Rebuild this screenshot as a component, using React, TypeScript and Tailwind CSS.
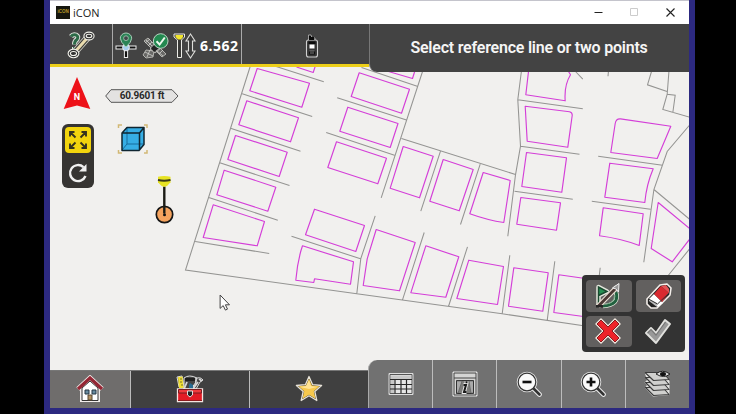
import type { ReactNode } from 'react';

const boundaries = [
  'M250 65L185 269.5L356.3 293.3L501.7 313.3L595 327',
  'M260 61L323.3 81.3',
  'M241.7 93.3L311.7 116',
  'M230 127.7L300 150.7',
  'M219.3 162.3L289 185',
  'M208.3 197L277.3 219.7',
  'M194.7 241L268.7 253',
  'M424 65L380.7 197.3',
  'M361 67L416.7 85.7',
  'M336.7 97.3L406 119.5',
  'M325.7 132L394 154.7',
  'M401 138L515 174',
  'M440 150.7L420.3 210.7',
  'M479.7 163.7L460 224',
  'M521 70L517.3 99.3L520 145.7L515 174.3L507.3 235.7',
  'M517.3 99.3L582.3 108.3',
  'M520 145.7L579 153.7',
  'M514 190.7L572.3 198.7',
  'M291 235.7L360 258.3',
  'M374.7 215.3L360.3 258L356.3 293.3',
  'M423.7 232L402 299.3',
  'M467 246.3L448 306',
  'M509.3 254.7L501.7 313.3',
  'M554.3 260.7L546.7 320',
  'M599.7 267.3L593 323',
  'M597.7 155.7L662 164.7',
  'M591.3 200.7L650 208.7',
  'M690 123.5L666.7 151L653.4 189L643.3 261.7',
  'M653.4 189L690 219.5',
  'M691 246L667.7 275',
  'M651 71L647 84.3L667.3 91.3',
  'M668.5 70L666.7 93.7L674.7 94.7L672.3 112.3',
  'M666.7 93.7L662.3 109L690 117',
  'M575 71L582.3 78.7',
  'M608 70L607.5 75.7',
];

const lots = [
  'M296 66.5L312.7 72L315 65',
  'M256.7 68L309 82.7L301.3 106.7L249.3 90.3Z',
  'M246.3 100.3L298 117.3L290 141.3L238.3 124.3Z',
  'M235 135L286.7 151.7L278.7 176L227.3 159Z',
  'M223.7 169.7L275.3 186.7L267.3 210.7L216.3 194.3Z',
  'M212.7 204.3L264 221L256.7 245.3L202.7 237Z',
  'M388 71L412 78L414.5 70',
  'M358.7 72.3L409 88.7L401 112.7L350.7 96Z',
  'M347.3 106.7L397.5 123L389.7 147L339.3 130.7Z',
  'M336 141.3L386 157.7L377.3 183.3L327.3 167Z',
  'M402.7 146L432.7 155.7L419 197.3L389.7 187.7Z',
  'M442.7 159L472.7 169L458.7 210.3L429.3 200.7Z',
  'M482.7 172L509.7 180L503.3 222Q488 220 469.3 213.3Z',
  'M314 208.7L364 225L355.3 251L305 234.3Z',
  'M302 245.3L353 261.3L350 283.7L314 278.3L313.3 282L295.3 279.7Q297 260 302 245.3Z',
  'M375.7 229L414.7 242L399 290.3L362.7 285L366.7 258.3Z',
  'M425.3 245.3L458.3 256.3L445.3 296.7L410.3 292.3Z',
  'M468.3 259.7L503 266L497 304L456.3 298Z',
  'M513.3 267.3L547.7 272.3L542.3 310.7L508 305.7Z',
  'M583 277.7L558.3 274.3L553.3 312L583 316',
  'M528 71L525.3 94.3L564.7 100.3Q563.5 85 570 74.3L568 71',
  'M524.7 105.7L569 111.2Q572 112 571.7 115L567.3 146.7L526.7 140.7Z',
  'M526 152L566 157.3L561.3 191.7L521.3 186Z',
  'M520.3 197L560 202.3L556 229.7L516.3 223.7Z',
  'M614.7 123Q615.5 118 620 118.4L670.3 125.7L656.7 158L610.3 152Z',
  'M609.3 162.7L652.7 168.3Q646 184 644.3 202L604.3 196.7Z',
  'M602.7 207.3L642.7 213.3L638.7 245Q620 238 599 235.3Z',
  'M692 230.5L657.7 202L650.7 248L671.7 261.3L692 235',
];

function SiteMap() {
  return (
    <svg className="absolute left-0 top-0" width="640" height="384" viewBox="49.5 23.5 640 384" fill="none">
      <path d={boundaries.join('')} stroke="#949492" strokeWidth="1.05" />
      <path d={lots.join('')} stroke="#d43ed8" strokeWidth="1.15" strokeLinejoin="round" />
      <g stroke="#1b1b14" strokeWidth="1.2">
        <circle cx="164" cy="214" r="8.2" fill="#f5a35e" stroke="#151515" strokeWidth="1.7" />
        <path d="M163.800 186v27" strokeWidth="2.4" />
        <circle cx="164" cy="214.200" r="1.5" fill="#111" stroke="none" />
        <path d="M157.500 176.200q6-1.600 12.500 0v5.500l-3.200 3.500q-3 2-6 0l-3.300-3.500z" fill="#e7e324" stroke="none" />
        <path d="M157.500 179.600q6 1.200 12.500 0" stroke="#383719" strokeWidth="2" />
      </g>
      <path d="M219.6 294.500v13.400l3.1-2.8 2.2 4.5 2.1-1-2.1-4.3h4.1z" fill="#fff" stroke="#444" strokeWidth="1" />
    </svg>
  );
}

type IconProps = { w: number; h: number; children: ReactNode; className?: string };
function Icon({ w, h, children, className }: IconProps) {
  return (
    <svg className={className} width={w} height={h} viewBox={`0 0 ${w} ${h}`} fill="none">
      {children}
    </svg>
  );
}

function MeasureIcon() {
  return (
    <Icon w={28} h={28}>
      <path d="M4 5.500q2-2.500 5-1.500 3 1.500 1 4.500-2.500 1.500-2.500 5M7.500 16v2.500" stroke="#dfe3dc" strokeWidth="5" />
      <path d="M4 5.500q2-2.500 5-1.500 3 1.500 1 4.500-2.500 1.500-2.500 5M7.500 16v2.500" stroke="#2c6a47" strokeWidth="3" />
      <path d="M7 22L22 5" stroke="#d9d8cf" strokeWidth="7" />
      <path d="M7 22L22 5" stroke="#3c3c38" strokeWidth="5.4" />
      <path d="M7 22L22 5" stroke="#eadcae" strokeWidth="3" />
      <g fill="#333" stroke="#f2f2ec" strokeWidth="1.1">
        <ellipse cx="6.5" cy="22.5" rx="5.4" ry="4.2" />
        <ellipse cx="22" cy="5" rx="5.1" ry="3.9" />
        <ellipse cx="6.5" cy="22.5" rx="3.1" ry="2" />
        <ellipse cx="22" cy="5" rx="2.8" ry="1.7" />
      </g>
    </Icon>
  );
}

function PositionIcon() {
  return (
    <Icon w={22} h={28}>
      <path d="M.5 15.500h21M11 13v13" stroke="#eee" strokeWidth="4.200" />
      <path d="M1.500 15.500h19M11 13v12" stroke="#111" strokeWidth="2.200" />
      <circle cx="11" cy="15.5" r="3.4" fill="#a8cfee" stroke="#eee" />
      <path d="M11 15q-5.7-5-5.7-8.8a5.7 5.2 0 0 1 11.4 0Q16.700 10 11 15z" fill="#2b8356" stroke="#a9cdb9" />
      <circle cx="11" cy="6.2" r="2.4" fill="#42464a" stroke="#94b9a4" />
    </Icon>
  );
}

function SatelliteIcon() {
  return (
    <Icon w={28} h={28}>
      <path d="M2 9l4-3 6 6-3 4zM14 19l4-3 6 6-4 3zM8 17l6-6 5 5-6 5zM1 23l3-5 8 1-1 6-7 1z" fill="#686866" stroke="#bdbdb9" strokeWidth=".9" />
      <path d="M9 16l4-4 4 4-5 4z" fill="#222" />
      <path d="M4 8l6 6M3 11l5-4M6 14l4-4M15 19l6 5M17 22l4-4M3 20l8 4M5 25l3-7" stroke="#d2d2ce" strokeWidth=".8" />
      <circle cx="18.700" cy="9" r="7.300" fill="#238950" stroke="#b9d5c4" strokeWidth="1" />
      <path d="M14.500 9.300l3.100 3.200 5.200-7" stroke="#edf8ee" strokeWidth="2" />
    </Icon>
  );
}

function HeightIcon() {
  return (
    <Icon w={24} h={28}>
      <path d="M1 2h10.500v3L8.500 8v17.500H4.500V8L1 5z" fill="#3a3a38" stroke="#ecece7" />
      <path d="M2.500 3h7.500v2L8 7.500H5L2.500 5z" fill="#f2e62f" />
      <path d="M17.500 2l4.500 7h-2.500v10H22l-4.500 7-4.500-7h2.500V9H13z" fill="#3b3b3b" stroke="#dededb" strokeWidth="1.100" />
    </Icon>
  );
}

function RadioIcon() {
  return (
    <Icon w={14} h={26}>
      <path d="M3.500 8V2h2.500l1 3h3v3" fill="#080808" stroke="#bbb" strokeWidth=".8" />
      <path d="M1.500 9Q1.500 7 3.500 7h7q2 0 2 2v13q0 2-2 2h-7q-2 0-2-2z" fill="#353535" stroke="#d0d0d0" strokeWidth="1.100" />
      <path d="M4 4h5v3H4zM3.500 8.500h7V11h-7z" fill="#0b0b0b" />
      <path d="M4.500 11.500h5v4h-5z" fill="#fff" />
      <path d="M4 18h6v3.500H4z" fill="#111" />
      <path d="M4.500 18h5M5 20h4" stroke="#999" strokeWidth=".8" />
    </Icon>
  );
}

function TitleBar() {
  return (
    <div className="flex h-6 items-center border-t border-[#c4c4cc] bg-white">
      <div className="ml-[6px] flex h-[13px] w-[14px] items-center justify-center bg-[#17170f] font-['Liberation_Sans'] text-[4.500px] font-bold text-[#b99b28]">iCON</div>
      <span className="ml-[3px] font-['Open_Sans',sans-serif] text-[11px] leading-none text-[#222]">iCON</span>
      <div className="ml-auto mr-[14px] flex items-center gap-[27px] text-[#222]">
        <Icon w={9} h={9}><path d="M.5 4.500h8" stroke="currentColor" /></Icon>
        <Icon w={9} h={9}><path d="M.5.500h7v7h-7z" stroke="#ccc" /></Icon>
        <Icon w={9} h={9}><path d="M.5.500l8 8M8.500.500l-8 8" stroke="currentColor" strokeWidth="1.100" /></Icon>
      </div>
    </div>
  );
}

function Header() {
  return (
    <header className="relative flex h-12 items-start">
      <div className="flex h-[43px] w-[319px] border-b-[3px] border-[#edcf1a] bg-[#434343]">
        <div className="flex w-[62px] items-center justify-center pt-[2px]"><MeasureIcon /></div>
        <div className="flex w-[130px] shrink-0 items-center border-x border-[#aaa] pt-[3px]">
          <div className="ml-[2px]"><PositionIcon /></div>
          <div className="ml-[5px]"><SatelliteIcon /></div>
          <div className="ml-[3px]"><HeightIcon /></div>
          <span className="ml-[3px] whitespace-nowrap font-['Open_Sans',sans-serif] text-[14px] font-bold tracking-[.5px] text-white">6.562</span>
        </div>
        <div className="flex flex-1 items-center justify-center pl-[13px] pt-[4px]"><RadioIcon /></div>
      </div>
      <div className="flex h-12 flex-1 items-center justify-center rounded-bl-lg border-l border-[#777] bg-[#434343] pr-px font-[Roboto,sans-serif] text-[16px] font-semibold tracking-[-.22px] text-[#f5f5f5]">
        <span className="whitespace-nowrap">Select reference line or two points</span>
      </div>
    </header>
  );
}

function MapControls() {
  return (
    <>
      <Icon w={28} h={34} className="absolute left-[13px] top-[52px]">
        <path d="M14 1l13.300 32L14 29.500.700 33z" fill="#ed1118" />
        <text x="14" y="24" textAnchor="middle" fontFamily="Roboto, sans-serif" fontSize="9" fontWeight="700" fill="white">N</text>
      </Icon>
      <div className="absolute left-[55px] top-[65px] flex h-[14px] w-[74px] items-center justify-center">
        <Icon w={74} h={14} className="absolute inset-0"><path d="M.700 7L6 .700h61L73 7l-6 6.300H6z" fill="#e3e2e1" stroke="#555" /></Icon>
        <span className="relative whitespace-nowrap font-[Roboto,sans-serif] text-[10px] font-bold leading-none tracking-[-.22px] text-[#292929]">60.9601 ft</span>
      </div>
      <div className="absolute left-[12px] top-[100px] flex h-16 w-8 flex-col items-center rounded-md bg-[#363432] pt-[3px]">
        <div className="flex h-[26px] w-[26px] items-center justify-center rounded bg-[#f2d40d]">
          <Icon w={20} h={20}>
            <path d="M7.500 7.500L2.500 2.500M2 6.500V2h4.500M12.500 7.500l5-5M13.500 2H18v4.500M7.500 12.500l-5 5M2 13.500V18h4.500M12.500 12.500l5 5M13.500 18H18v-4.500" stroke="#35331f" strokeWidth="1.900" />
          </Icon>
        </div>
        <Icon w={22} h={22} className="mt-[9px]">
          <path d="M16.500 5.200A8 8 0 1 0 18.500 14" stroke="#f0f0f0" strokeWidth="2.400" />
          <path d="M19.500 2v7.500H12z" fill="#f0f0f0" />
        </Icon>
      </div>
      <Icon w={32} h={32} className="absolute left-[67px] top-[99px]">
        <path d="M1.500 5V2H5M27 2h3v3M1.500 27v3H5M27 30h3v-3" stroke="#d2b875" strokeWidth="1.500" />
        <path d="M5 10l5-5.500h17v17l-5 6H5z" fill="#36aee5" />
        <path d="M10 5v16h16M10 21l-5 6" stroke="#166d9d" />
        <path d="M5 10l5-5.500h17v17l-5 6H5zM5 10h17.500v17.500M22.500 10L27 4.500" stroke="#102631" strokeWidth="1.500" strokeLinejoin="round" />
      </Icon>
    </>
  );
}

function EditPanel() {
  const button = 'flex items-center justify-center rounded bg-[#62605f]';
  return (
    <div className="absolute left-[532px] top-[251px] grid h-[77px] w-[103px] grid-cols-2 gap-x-[4px] gap-y-[4px] rounded bg-[#333] px-[4px] py-[5px]">
      <div className={button}>
        <Icon w={28} h={28} className="-ml-px">
          <path d="M4.500 25V5l8.500 4.500-8.500 4M22 10q4 13-13 14" stroke="#e4e6dc" strokeWidth="4.500" strokeLinejoin="round" />
          <path d="M5 5l8 4.500L5 14z" fill="#269052" />
          <path d="M4.500 25V5l8.500 4.500-8.500 4" stroke="#1b4a30" strokeWidth="1.500" />
          <path d="M22 10q4 13-13 14" stroke="#22613f" strokeWidth="3" />
          <path d="M20.500 13q0 8-8 9" stroke="#78aa85" strokeWidth="1" />
          <path d="M4 24.500L23 5" stroke="#ece1d6" strokeWidth="5" />
          <path d="M4 24.500L23 5" stroke="#4a3733" strokeWidth="2.800" />
          <path d="M18.500 6L25 1.500 24.500 10 22 7z" fill="#999" stroke="#eee" />
          <path d="M2 23h7v2.500H2z" fill="#252525" />
        </Icon>
      </div>
      <div className={button}>
        <Icon w={28} h={28}>
          <path d="M3 17L16 3l7-1 4 4-1 7-13 13H7l-4-4z" fill="#222" stroke="#f3eeea" strokeWidth="1.600" strokeLinejoin="round" />
          <path d="M5 17l5-5 9 9-5 4-9-7z" fill="#fff" />
          <path d="M10 12l7-8 8 7-7 9z" fill="#d92a30" />
          <path d="M5 19l8 6v-4l-8-4z" fill="#bbb" />
          <path d="M17 4l5-1 3 4v4z" fill="#e55355" />
          <path d="M4.500 17l9 5L25 11" stroke="#333" />
        </Icon>
      </div>
      <div className={button}>
        <Icon w={28} h={28} className="-ml-px">
          <path d="M7 2l7 7 7-7 5 5-7 7 7 7-5 5-7-7-7 7-5-5 7-7-7-7z" fill="#f2e8df" stroke="#f2e8df" strokeWidth="1.500" strokeLinejoin="round" />
          <path d="M7 3l7 7 7-7 4 4-7 7 7 7-4 4-7-7-7 7-4-4 7-7-7-7z" fill="#ee2329" stroke="#851d20" strokeWidth="1" />
        </Icon>
      </div>
      <div className="flex items-center justify-center">
        <Icon w={28} h={28}>
          <path d="M2 16l5-5 5 5L21 3l5 4-14 19z" fill="#999" stroke="#e0e0dd" strokeWidth="2" strokeLinejoin="round" />
          <path d="M3.500 16L7 12.500l5 5.500L21.500 5" stroke="#777" strokeWidth="1.200" />
        </Icon>
      </div>
    </div>
  );
}

function HomeIcon() {
  return (
    <Icon w={28} h={28}>
      <path d="M5 14h18v12H5z" fill="#fff" stroke="#f2eeec" strokeWidth="2" />
      <path d="M2 14L14 3l12 11" stroke="#f2eeec" strokeWidth="5" />
      <path d="M6 13v12.500h16V13l-8-7z" fill="#fff" stroke="#333" />
      <path d="M2 14L14 3l12 11" stroke="#942634" strokeWidth="3.200" />
      <path d="M9 15h4v4H9zM16 15h4v4h-4z" fill="#688ba0" stroke="#243440" />
      <path d="M12 25v-5h4v5z" fill="#b29160" stroke="#594631" />
    </Icon>
  );
}

function ToolboxIcon() {
  return (
    <Icon w={28} h={28}>
      <path d="M1 2l5-1 2 11H3zM8 3q5-4 13 0l-1 4-5 7H8zM19 4q5-3 8 1l-3 2-4 7h-4l4-6z" fill="#444" stroke="#ddd" />
      <path d="M2 2l4.500-.500L7.500 13H3z" fill="#f0df35" />
      <path d="M4 4h2M4 7h2M5 10h2" stroke="#77712a" />
      <path d="M9 3h10v3H9z" fill="#202020" />
      <path d="M11 7l-3 7M22 7l-5 7M23 4l3 2" stroke="#d6d6d6" strokeWidth="1.800" />
      <path d="M14 8l3 2v4h-4v-4z" fill="#276b91" />
      <path d="M1.500 14h25v12.500h-25z" fill="#e31b25" stroke="#f3e5e1" strokeWidth="1.300" />
      <path d="M2.500 14.500h23v3.500h-23z" fill="#f03a3d" stroke="#771c20" />
      <path d="M2 25.500h24" stroke="#8e1b20" />
      <path d="M11.500 16h5v4L14 22l-2.500-2z" fill="#222" stroke="#ddd" />
    </Icon>
  );
}

function StarIcon() {
  return (
    <Icon w={28} h={28}>
      <path d="M14 1.500l3.600 8.200 9 .8-6.800 6 2 9-7.800-4.700L6.200 25.500l2-9-6.800-6 9-.8z" fill="#333" stroke="#e9e4d9" strokeWidth="1.300" strokeLinejoin="round" />
      <path d="M14 3.700l2.900 6.900 7.600.700-5.700 4.900 1.700 7.500-6.500-4-6.500 4 1.700-7.500-5.700-4.900 7.600-.700z" fill="#f6c84d" />
      <path d="M14 5l2 6 6 1-8 2-9-2 6-1z" fill="#ffe394" />
    </Icon>
  );
}

function TableIcon() {
  return (
    <Icon w={26} h={24}>
      <path d="M1 1.500h24v21H1z" fill="#e6e6e6" stroke="#ddd" />
      <path d="M2 2.500h22v19H2z" stroke="#555" />
      <path d="M3 3.500h20v4H3zM3 8h3v13H3z" fill="#c8c8c8" />
      <path d="M2 7.500h22M2 12.500h22M2 17h22M7 7.500v14M13 7.500v14M18.500 7.500v14" stroke="#282828" strokeWidth="1.200" />
    </Icon>
  );
}

function InfoIcon() {
  return (
    <Icon w={26} h={26}>
      <path d="M1 1h24v24H1z" fill="#d4d4d3" stroke="#e6e6e6" />
      <path d="M2 2h22v22H2zM2 7h22" stroke="#444" />
      <path d="M4.500 9.500h17v13h-17z" fill="#7d7d7b" stroke="#333" />
      <path d="M5 10h5l-4 12H5M21 10h-4l2 12h2" fill="#aaa" stroke="#555" strokeWidth=".6" />
      <path d="M11.500 14H14l-2 7h2.500M14.500 10.200v2" stroke="#eee" strokeWidth="3.800" />
      <path d="M11.500 14H14l-2 7h2.500M14.500 10.200v2" stroke="#191919" strokeWidth="2" />
    </Icon>
  );
}

function MagnifierIcon({ plus = false }: { plus?: boolean }) {
  return (
    <Icon w={26} h={26}>
      <path d="M17 17l6.500 6.500" stroke="#eee" strokeWidth="4.600" strokeLinecap="round" />
      <circle cx="11" cy="11" r="9" fill="#fff" stroke="#e6e6e6" strokeWidth="2.600" />
      <path d="M16.500 16.500l7 7" stroke="#333" strokeWidth="2.600" strokeLinecap="round" />
      <circle cx="11" cy="11" r="8.800" fill="#fafafa" stroke="#333" strokeWidth="1.200" />
      <path d={plus ? 'M6.500 11h9M11 6.500v9' : 'M6.500 11h9'} stroke="#111" strokeWidth="2.600" />
    </Icon>
  );
}

function LayersIcon() {
  return (
    <Icon w={28} h={28}>
      <path d="M1.500 2H20l6.500 9v14L10 26.500 2 18l2-3-2.500-2.500L4 10z" fill="#e5e5e3" />
      <g fill="#d0d0ce" stroke="#3c3c3c" strokeWidth="1.100" strokeLinejoin="round">
        <path d="M2.500 17.500H20l6 7-15.500 1z" />
        <path d="M2.500 12.500H20l6 7-15.500 1z" />
        <path d="M2.500 7.500H20l6 7-15.500 1z" />
        <path d="M2 2.500h18l6 7-15.500 1z" />
      </g>
      <path d="M13 4q6-5.500 14 0-6 5-14 0z" fill="#ddd" stroke="#222" />
      <ellipse cx="20" cy="4" rx="3" ry="2" fill="#111" />
    </Icon>
  );
}

function Footer() {
  const tool = 'flex flex-1 items-center justify-center border-r border-[#bcbcbc]';
  return (
    <footer className="relative flex h-[48px] items-end">
      <div className="flex h-[38px] w-[318px] border-t border-[#777] bg-[#404040]">
        <div className="flex w-[81px] items-center justify-center border-r border-[#bbb] bg-[#6f6d6c] pb-px"><HomeIcon /></div>
        <div className="flex w-[119px] items-center justify-center border-r border-[#bbb] pb-px"><ToolboxIcon /></div>
        <div className="flex flex-1 items-center justify-center pb-px"><StarIcon /></div>
      </div>
      <div className="flex h-[48px] flex-1 rounded-tl-[9px] border-l border-[#aaa] bg-[#717171]">
        <div className={tool}><TableIcon /></div>
        <div className={tool}><InfoIcon /></div>
        <div className={tool}><MagnifierIcon /></div>
        <div className={tool}><MagnifierIcon plus /></div>
        <div className="flex flex-1 items-center justify-center"><LayersIcon /></div>
      </div>
    </footer>
  );
}

export default function App() {
  return (
    <div className="flex h-[414px] w-[736px] overflow-hidden bg-black pl-[44px]">
      <div className="flex h-full w-[651px] flex-col border-x-[6px] border-b-[6px] border-[#2c2980]">
        <TitleBar />
        <main className="relative flex h-[384px] flex-col justify-between overflow-hidden bg-[#f1f0ee]">
          <SiteMap />
          <MapControls />
          <EditPanel />
          <Header />
          <Footer />
        </main>
      </div>
    </div>
  );
}
